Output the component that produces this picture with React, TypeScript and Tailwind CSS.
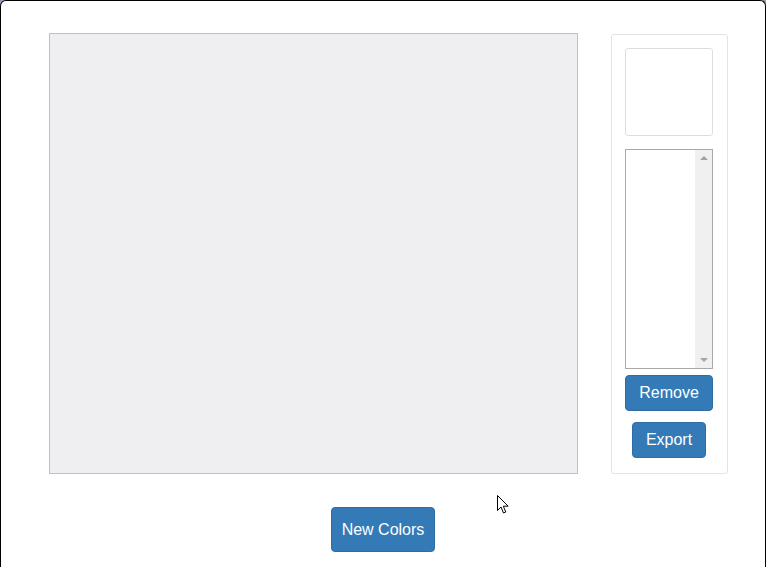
import React from 'react';

const font = { fontFamily: '"Liberation Sans", Arial, sans-serif' };

const Cursor: React.FC = () => (
  <svg className="absolute left-[496px] top-[494px]" width="13" height="20" viewBox="0 0 13 20">
    <path d="M0.5 0.5 L0.5 15.5 L4 12 L6.5 18 L8.8 17 L6.3 11.2 L11.2 11.2 Z" fill="#fff" stroke="#000" strokeWidth="1" />
  </svg>
);

export default function App() {
  return (
    <div className="w-[766px] h-[567px] bg-[#9a9ab4]" style={font}>
      <div className="relative w-full h-full bg-white border-l border-t border-r border-black rounded-t-[6px] overflow-hidden">
        <div className="flex items-start pl-[48px] pt-[32px]">
          <div className="w-[529px] h-[441px] border border-[#c0c0c0] bg-[#efeff1]" />
          <div className="ml-[33px] mt-[1px] w-[117px] h-[440px] border border-[#e3e3e3] rounded-[3px] pl-[13px] pr-[14px] pt-[13px] flex flex-col items-center">
            <div className="w-[88px] h-[88px] border border-[#dedede] rounded-[3px]" />
            <div className="mt-[13px] w-[88px] h-[220px] border border-[#a9a9a9] flex justify-end">
              <div className="w-[17px] h-full bg-[#f0f0f0] flex flex-col items-center justify-between py-[6px]">
                <div className="w-0 h-0 border-l-[4px] border-r-[4px] border-b-[4px] border-l-transparent border-r-transparent border-b-[#a3a3a3]" />
                <div className="w-0 h-0 border-l-[4px] border-r-[4px] border-t-[4px] border-l-transparent border-r-transparent border-t-[#a3a3a3]" />
              </div>
            </div>
            <button className="mt-[6px] w-[88px] h-[36px] bg-[#337ab7] border border-[#2e6da4] rounded-[4px] text-white text-[16px]">
              Remove
            </button>
            <button className="mt-[11px] w-[74px] h-[36px] bg-[#337ab7] border border-[#2e6da4] rounded-[4px] text-white text-[16px]">
              Export
            </button>
          </div>
        </div>
        <div className="flex justify-center mt-[33px]">
          <button className="w-[104px] h-[45px] bg-[#337ab7] border border-[#2e6da4] rounded-[4px] text-white text-[16px]">
            New Colors
          </button>
        </div>
        <Cursor />
      </div>
    </div>
  );
}
